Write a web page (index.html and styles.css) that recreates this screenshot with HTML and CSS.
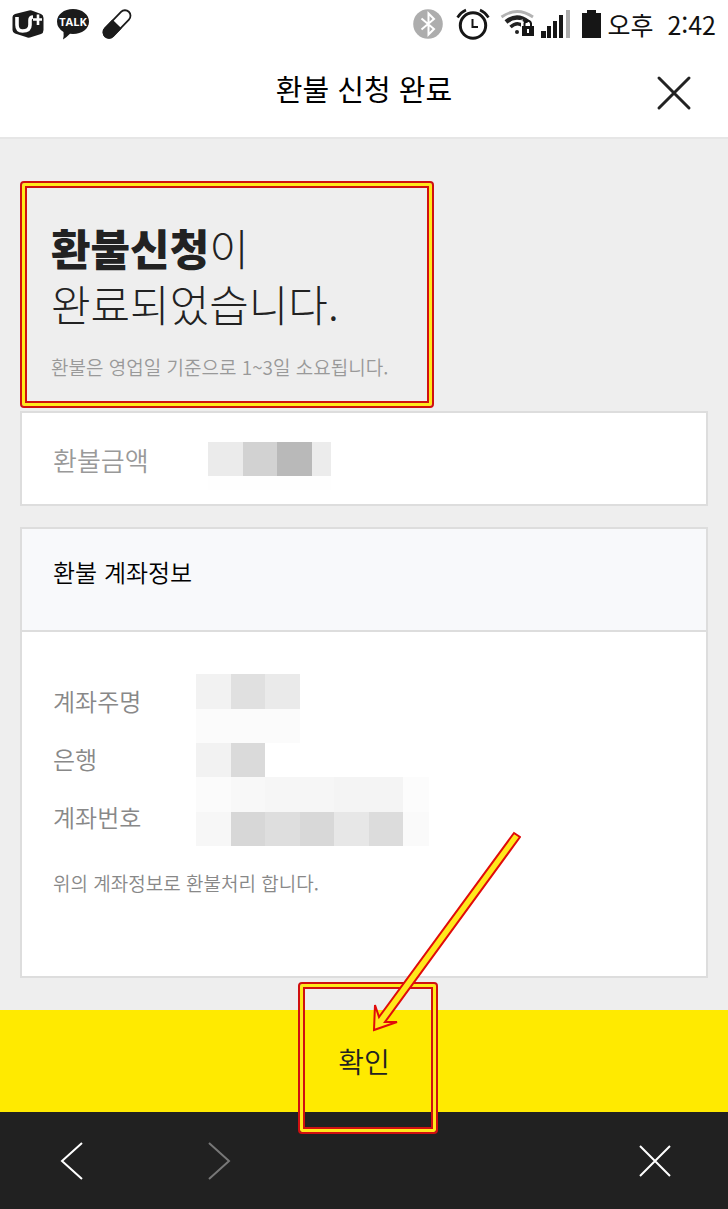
FILE: index.html
```html
<!DOCTYPE html>
<html lang="ko">
<head>
  <meta charset="UTF-8">
  <meta name="viewport" content="width=device-width, initial-scale=1.0">
  <title>환불 신청 완료</title>
  <link rel="stylesheet" href="styles.css">
</head>
<body>

  <div class="status-bar">
    <div class="status-left">
      <svg width="32" height="32" viewBox="0 0 32 32">
        <path d="M3 6 L17 2.500 Q19 2 21 3 L29 6 Q31.500 7 31.500 10 V22 Q31.500 25 29 26 L18 29.500 Q16 30 14 29 L3 25.500 Q.5 24.500 .5 22 V9 Q.5 7 3 6Z" fill="#1b1b1b"/>
        <path d="M5 9 V17 Q5 23 10.500 23 Q18 23 18 17 V12 Q18 9 21 9" fill="none" stroke="#fff" stroke-width="3.600"/>
        <path d="M21 11.500 H30 M26 6.500 V17" fill="none" stroke="#fff" stroke-width="2.600"/>
      </svg>
      <svg width="34" height="32" viewBox="0 0 34 32">
        <path d="M17 1 C26 1 33 6.500 33 13.500 C33 21 26 26 17 26 L14 25.800 Q11 29 7 31.500 Q8 28 7.500 24 Q1 20 1 13.500 C1 6.500 8 1 17 1Z" fill="#1b1b1b"/>
        <text x="17" y="18" text-anchor="middle" class="talk">TALK</text>
      </svg>
      <svg width="32" height="32" viewBox="0 0 32 32">
        <g transform="rotate(44 15 16)">
          <rect x="9.500" y="-1" width="11" height="34" rx="5.500" fill="#fff" stroke="#1b1b1b" stroke-width="1.800"/>
          <path d="M8.600 16 H21.400 V27.500 A6.400 6.400 0 0 1 8.600 27.500Z" fill="#1b1b1b"/>
        </g>
      </svg>
    </div>

    <div class="status-right">
      <svg width="37" height="32" viewBox="0 0 37 32">
        <circle cx="16" cy="16" r="14.800" fill="#adadad"/>
        <path d="M9.500 10.500 L22 21 L16.500 26.500 V5.500 L22 11 L9.500 21.500" fill="none" stroke="#fff" stroke-width="2"/>
      </svg>
      <svg width="38" height="32" viewBox="0 0 38 32">
        <g fill="none" stroke="#161616">
          <circle cx="18" cy="17.500" r="12.700" stroke-width="3"/>
          <path d="M17.500 11 V19 H23" stroke-width="2"/>
          <path d="M2.500 9.500 Q5.500 4.500 11 2 M25 2 Q30.500 4.500 33.500 9.500" stroke-width="2.500"/>
        </g>
      </svg>
      <svg width="35" height="32" viewBox="0 0 35 32">
        <path d="M2.500 9 Q18 -2 34 9" fill="none" stroke="#b3b3b3" stroke-width="2.800"/>
        <path d="M7 14 Q18 5 29 14" fill="none" stroke="#222" stroke-width="4.500"/>
        <path d="M11.500 19 Q18 13 24 18" fill="none" stroke="#222" stroke-width="3.500"/>
        <circle cx="18" cy="24" r="2" fill="#222"/>
        <path d="M12 14 L24 12" stroke="#fff"/>
        <rect x="22" y="15" width="13" height="14" fill="#fff"/>
        <rect x="23" y="18" width="12" height="10" fill="#161616"/>
        <path d="M25.500 18 V15.500 A3.300 3.300 0 0 1 32 15.500 V18" fill="none" stroke="#161616" stroke-width="2"/>
        <path d="M29 21 V25" stroke="#fff" stroke-width="2"/>
      </svg>
      <svg width="36" height="32" viewBox="0 0 36 32">
        <path d="M1 23h5v7H1zM7 18h4v12H7zM13 13h4v17h-4zM19 7h4v23h-4z" fill="#161616"/>
        <path d="M26 2h4v28h-4z" fill="#adadad"/>
      </svg>
      <svg width="19" height="32" viewBox="0 0 19 32">
        <path d="M0 5h5V2h9v3h5v25H0z" fill="#161616"/>
      </svg>
      <span class="clock">오후&nbsp; 2:42</span>
    </div>
  </div>

  <header class="header">
    <h1>환불 신청 완료</h1>
    <button class="close-btn" type="button" aria-label="닫기">
      <svg width="36" height="36" viewBox="0 0 36 36">
        <path d="M3 3 L33 33 M33 3 L3 33" fill="none" stroke="#222" stroke-width="3" stroke-linecap="round"/>
      </svg>
    </button>
  </header>

  <main class="content">
    <section class="intro highlight">
      <h2><strong>환불신청</strong>이<br>완료되었습니다.</h2>
      <p>환불은 영업일 기준으로 1~3일 소요됩니다.</p>
    </section>

    <section class="card amount">
      <span class="amount-label">환불금액</span>
      <svg width="123" height="48" viewBox="0 0 123 48" shape-rendering="crispEdges">
        <rect width="35" height="34" fill="#ebebeb"/>
        <rect x="35" width="34" height="34" fill="#d2d2d2"/>
        <rect x="69" width="35" height="34" fill="#b9b9b9"/>
        <rect x="104" width="19" height="34" fill="#ececec"/>
        <rect y="34" width="123" height="14" fill="#fefefe"/>
      </svg>
    </section>

    <section class="card account">
      <h3>환불 계좌정보</h3>
      <div class="account-body">
        <div class="account-info">
          <ul>
            <li>계좌주명</li>
            <li>은행</li>
            <li>계좌번호</li>
          </ul>
          <svg width="233" height="172" viewBox="0 0 233 172" shape-rendering="crispEdges">
            <rect width="35" height="35" fill="#f2f2f2"/>
            <rect x="35" width="34" height="35" fill="#e0e0e0"/>
            <rect x="69" width="35" height="35" fill="#eaeaea"/>
            <rect y="35" width="104" height="34" fill="#fbfbfb"/>
            <rect y="69" width="35" height="34" fill="#f2f2f2"/>
            <rect x="35" y="69" width="34" height="34" fill="#dadada"/>
            <rect y="103" width="35" height="35" fill="#fbfbfb"/>
            <rect x="35" y="103" width="34" height="35" fill="#f8f8f8"/>
            <rect x="69" y="103" width="69" height="35" fill="#f6f6f6"/>
            <rect x="138" y="103" width="69" height="35" fill="#f4f4f4"/>
            <rect x="207" y="103" width="26" height="35" fill="#fcfcfc"/>
            <rect y="138" width="35" height="34" fill="#f7f7f7"/>
            <rect x="35" y="138" width="34" height="34" fill="#d7d7d7"/>
            <rect x="69" y="138" width="35" height="34" fill="#dedede"/>
            <rect x="104" y="138" width="34" height="34" fill="#d8d8d8"/>
            <rect x="138" y="138" width="35" height="34" fill="#e7e7e7"/>
            <rect x="173" y="138" width="34" height="34" fill="#dcdcdc"/>
            <rect x="207" y="138" width="26" height="34" fill="#fafafa"/>
          </svg>
        </div>
        <p>위의 계좌정보로 환불처리 합니다.</p>
      </div>
    </section>
  </main>

  <div class="confirm">
    <button class="confirm-btn" type="button">확인</button>
    <div class="confirm-mark highlight"></div>
    <svg class="confirm-arrow" width="150" height="202" viewBox="0 0 150 202">
      <path d="M143 2 L149 6 L14 191 L26 191 L3 199 L4 174 L8 186Z" fill="#ffe81c" stroke="#e00b0b" stroke-width="2"/>
    </svg>
  </div>

  <nav class="nav-bar">
    <button type="button" aria-label="이전">
      <svg width="24" height="40" viewBox="0 0 24 40">
        <path d="M22 2 L2 20 L22 38" fill="none" stroke="#fff" stroke-width="2"/>
      </svg>
    </button>
    <button class="next" type="button" aria-label="다음">
      <svg width="24" height="40" viewBox="0 0 24 40">
        <path d="M2 2 L22 20 L2 38" fill="none" stroke="#777" stroke-width="2"/>
      </svg>
    </button>
    <button class="nav-close" type="button" aria-label="창 닫기">
      <svg width="34" height="34" viewBox="0 0 34 34">
        <path d="M2 2 L32 32 M32 2 L2 32" fill="none" stroke="#fff" stroke-width="2"/>
      </svg>
    </button>
  </nav>

</body>
</html>
```

FILE: styles.css
```css
* {
  box-sizing: border-box;
}
body {
  margin: 0;
  min-height: 100vh;
  display: flex;
  flex-direction: column;
  font-family: "Noto Sans CJK KR", sans-serif;
  background: #eee;
  color: #000;
}
h1, h2, h3, p, ul {
  margin: 0;
  padding: 0;
  font-weight: normal;
}
button {
  padding: 0;
  border: none;
  background: none;
  font-family: inherit;
  cursor: pointer;
}
svg {
  display: block;
  flex: none;
}

.status-bar {
  display: flex;
  justify-content: space-between;
  padding: 8px 12px;
  background: #fff;
}
.status-left {
  display: flex;
  gap: 12px;
}
.status-right {
  display: flex;
  gap: 6px;
}
.talk {
  font: bold 11px "Open Sans", sans-serif;
  fill: #fff;
}
.clock {
  font-size: 25px;
  line-height: 32px;
  color: #111;
}

.header {
  position: relative;
  height: 91px;
  background: #fff;
  border-bottom: 2px solid #e6e6e6;
}
.header h1 {
  font-size: 29px;
  line-height: 80px;
  text-align: center;
}
.close-btn {
  position: absolute;
  top: 27px;
  right: 36px;
}

.highlight {
  border: 3px solid #ffe81c;
  border-radius: 2px;
  outline: 2px solid #d01010;
  box-shadow: inset 0 0 0 2px #d01010;
}

.content {
  flex: 1;
  padding: 44px 20px 32px;
}
.intro {
  width: fit-content;
  margin: 0 2px 5px;
  padding: 33px 41px 18px 26px;
}
.intro h2 {
  font-size: 43px;
  font-weight: 300;
  line-height: 56px;
  color: #222;
}
.intro h2 strong {
  font-weight: 900;
}
.intro p {
  margin-top: 18px;
  font-size: 19px;
  font-weight: 350;
  line-height: 36px;
  color: #999;
}

.card {
  background: #fff;
  border: 2px solid #ddd;
}
.amount {
  display: flex;
  gap: 59px;
  padding: 29px 31px 14px;
  margin-bottom: 21px;
}
.amount-label {
  font-size: 26px;
  font-weight: 350;
  line-height: 36px;
  color: #999;
}
.account h3 {
  padding: 25px 31px 40px;
  font-size: 24px;
  font-weight: 350;
  line-height: 36px;
  background: #f8f9fb;
  border-bottom: 2px solid #ddd;
}
.account-body {
  padding: 40px 31px 75px;
  color: #888;
}
.account-info {
  display: flex;
  gap: 55px;
}
.account-info ul {
  list-style: none;
  font-size: 24px;
  font-weight: 350;
  line-height: 58px;
}
.account-info svg {
  margin-top: 2px;
}
.account-body p {
  margin-top: 19px;
  font-size: 19px;
  font-weight: 350;
  line-height: 36px;
}

.confirm {
  position: relative;
  z-index: 1;
}
.confirm-btn {
  display: block;
  width: 100%;
  height: 102px;
  font-size: 28px;
  font-weight: 350;
  color: #222;
  background: #ffea00;
}
.confirm-mark {
  position: absolute;
  top: -26px;
  bottom: -20px;
  left: 50%;
  width: 136px;
  margin-left: -64px;
  pointer-events: none;
}
.confirm-arrow {
  position: absolute;
  bottom: 79px;
  left: 50%;
  margin-left: 7px;
  pointer-events: none;
}

.nav-bar {
  display: flex;
  align-items: center;
  height: 97px;
  padding: 0 56px 0 60px;
  background: #212121;
}
.next {
  margin-left: 123px;
}
.nav-close {
  margin-left: auto;
}
```
